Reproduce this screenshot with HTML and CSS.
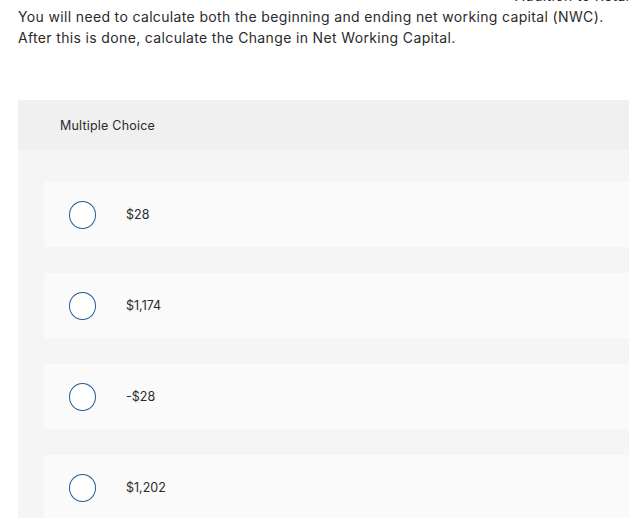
FILE: index.html
```html
<!DOCTYPE html>
<html>
<head>
<meta charset="utf-8">
<link rel="stylesheet" href="styles.css">
</head>
<body>
<div class="prompt">
  <div class="cut">Addition to Retained Earnings</div>
  <p class="line">You will need to calculate both the beginning and ending net working capital (NWC).</p>
  <p class="line">After this is done, calculate the Change in Net Working Capital.</p>
</div>
<div class="panel">
  <div class="panel-head">Multiple Choice</div>
  <div class="panel-body">
    <div class="opt"><span class="radio"></span><span class="label">$28</span></div>
    <div class="opt"><span class="radio"></span><span class="label">$1,174</span></div>
    <div class="opt"><span class="radio"></span><span class="label">-$28</span></div>
    <div class="opt"><span class="radio"></span><span class="label">$1,202</span></div>
  </div>
</div>
</body>
</html>
```
FILE: styles.css
```css
html, body {
  margin: 0;
  padding: 0;
  background: #ffffff;
  overflow: hidden;
}
body {
  width: 629px;
  height: 518px;
  font-family: Inter, "Open Sans", sans-serif;
  color: #2b2b2b;
}
.prompt {
  margin-top: -15px;
  padding-left: 18px;
  font-size: 14px;
  line-height: 21px;
  letter-spacing: 0.35px;
}
.cut {
  height: 21px;
  padding-left: 497px;
  white-space: nowrap;
  overflow: hidden;
}
.line {
  margin: 0;
  white-space: nowrap;
}
.panel {
  margin-top: 52px;
  margin-left: 18px;
  width: 640px;
}
.panel-head {
  background: #f0f0f0;
  height: 50px;
  display: flex;
  align-items: center;
  padding-left: 42px;
  font-size: 12.5px;
  letter-spacing: 0.2px;
}
.panel-body {
  background: #f5f5f5;
  padding: 32px 0 20px 26px;
  display: flex;
  flex-direction: column;
  gap: 26px;
}
.opt {
  background: #fafafa;
  height: 65px;
  display: flex;
  align-items: center;
  padding-left: 25px;
  font-size: 12.5px;
}
.radio {
  width: 25px;
  height: 26px;
  border: 1.5px solid #255d97;
  border-radius: 50%;
  background: #ffffff;
  flex: none;
}
.label {
  margin-left: 30px;
}
```
